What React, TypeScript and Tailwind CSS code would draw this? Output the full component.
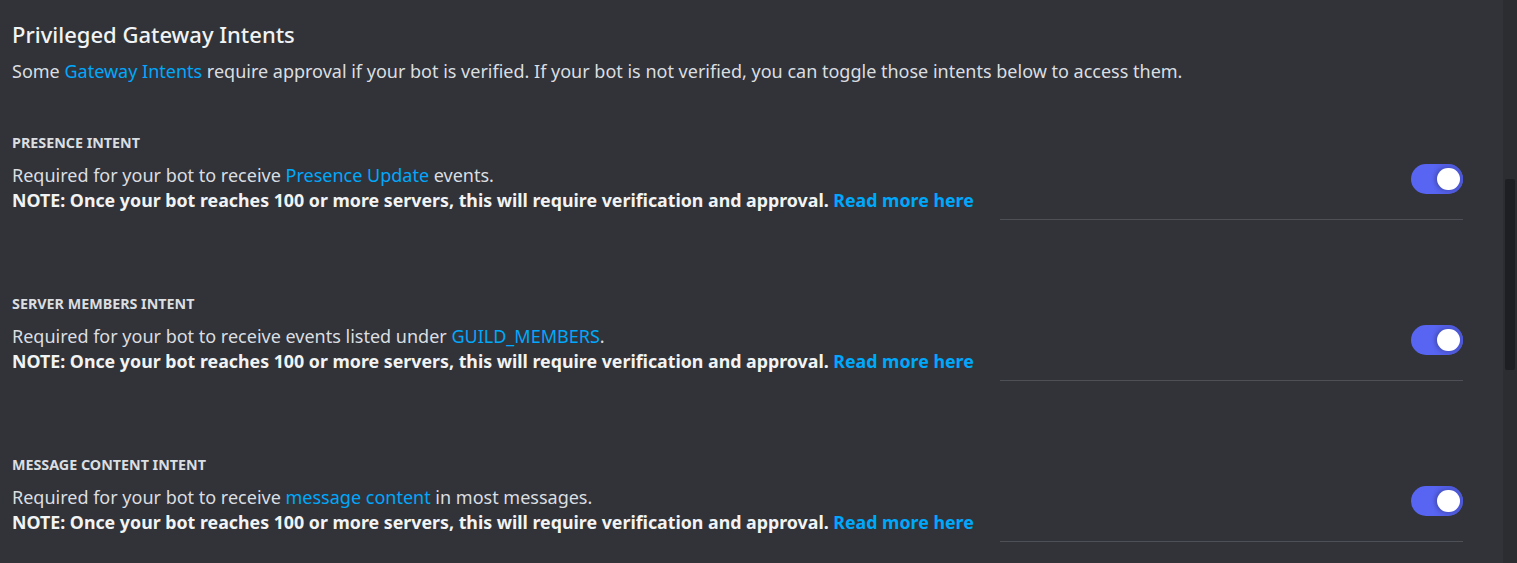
import React from 'react';

const Toggle: React.FC = () => (
  <div className="relative w-[52px] h-[30px] mt-px rounded-full bg-[#5865f2] shrink-0">
    <div className="absolute right-0 top-0 h-full w-[30px] rounded-r-full bg-gradient-to-r from-transparent to-[#4c57d6]" />
    <div className="absolute right-[3px] top-[4px] w-[23px] h-[22px] rounded-full bg-white shadow-[-2px_0_4px_rgba(0,0,0,0.25)]" />
  </div>
);

const Link: React.FC<{ children: React.ReactNode; bold?: boolean }> = ({ children, bold }) => (
  <span className={`text-[#00a8fc] ${bold ? 'font-bold' : ''}`}>{children}</span>
);

const IntentRow: React.FC<{ label: string; desc: React.ReactNode }> = ({ label, desc }) => (
  <div className="mt-[76px] first:mt-0">
    <div className="text-[14.3px] leading-4 font-bold uppercase text-[#dbdee1]">{label}</div>
    <div className="flex items-start mt-[12px]">
      <div className="whitespace-nowrap text-[18px] leading-[25px] text-[#dbdee1]">
        <div>{desc}</div>
        <div className="font-bold text-[17.8px] text-[#f2f3f5]">
          NOTE: Once your bot reaches 100 or more servers, this will require verification and approval.{' '}
          <Link bold>Read more here</Link>
        </div>
      </div>
      <div className="flex-1 flex flex-col items-end ml-[26px]">
        <Toggle />
        <div className="w-full h-px bg-[#4e5058] mt-[25px]" />
      </div>
    </div>
  </div>
);

export default function App() {
  return (
    <div className="flex w-[1517px] h-[563px] bg-[#313338] overflow-hidden font-['Noto_Sans',sans-serif]">
      <div className="flex-1 pl-3 pr-10 pt-[20px]">
        <h2 className="text-[22px] leading-[28px] font-medium text-[#f2f3f5]">Privileged Gateway Intents</h2>
        <p className="mt-[12px] text-[18px] leading-[22px] text-[#dbdee1]">
          Some <Link>Gateway Intents</Link> require approval if your bot is verified. If your bot is not verified, you can toggle those intents below to access them.
        </p>
        <div className="mt-[53px]">
          <IntentRow
            label="Presence Intent"
            desc={<>Required for your bot to receive <Link>Presence Update</Link> events.</>}
          />
          <IntentRow
            label="Server Members Intent"
            desc={<>Required for your bot to receive events listed under <Link>GUILD_MEMBERS</Link>.</>}
          />
          <IntentRow
            label="Message Content Intent"
            desc={<>Required for your bot to receive <Link>message content</Link> in most messages.</>}
          />
        </div>
      </div>
      <div className="w-[14px] bg-[#2b2d31] pt-[179px] px-[2px]">
        <div className="h-[191px] bg-[#1e1f22] rounded-[2px]" />
      </div>
    </div>
  );
}
